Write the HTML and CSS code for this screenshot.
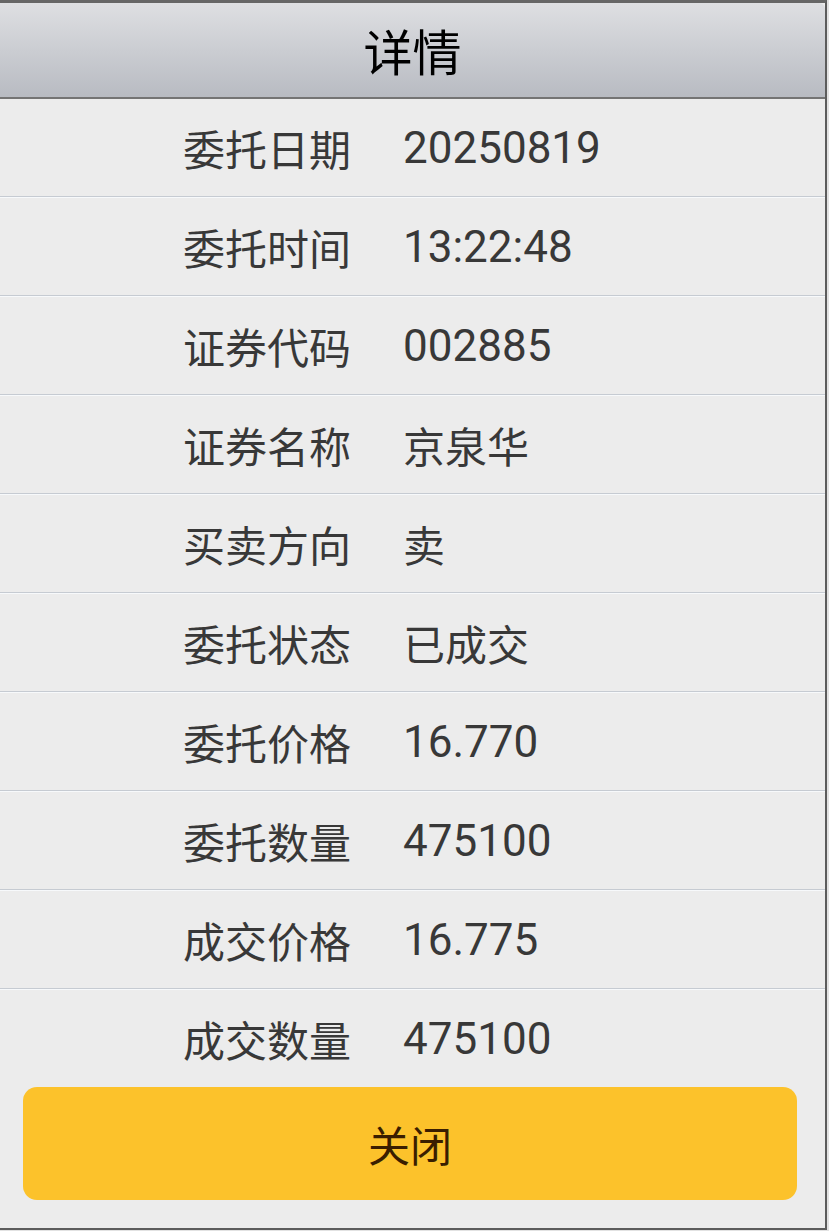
FILE: index.html
```html
<!DOCTYPE html>
<html lang="zh-CN">
<head>
    <meta charset="UTF-8">
    <meta name="viewport" content="width=device-width, initial-scale=1.0">
    <title>详情</title>
    <link rel="stylesheet" href="styles.css">
</head>
<body>
    <div class="dialog">
        <div class="dialog-title">详情</div>

        <div class="detail-list">
            <div class="detail-row"><span class="label">委托日期</span><span class="value">20250819</span></div>
            <div class="detail-row"><span class="label">委托时间</span><span class="value">13:22:48</span></div>
            <div class="detail-row"><span class="label">证券代码</span><span class="value">002885</span></div>
            <div class="detail-row"><span class="label">证券名称</span><span class="value cjk">京泉华</span></div>
            <div class="detail-row"><span class="label">买卖方向</span><span class="value cjk">卖</span></div>
            <div class="detail-row"><span class="label">委托状态</span><span class="value cjk">已成交</span></div>
            <div class="detail-row"><span class="label">委托价格</span><span class="value">16.770</span></div>
            <div class="detail-row"><span class="label">委托数量</span><span class="value">475100</span></div>
            <div class="detail-row"><span class="label">成交价格</span><span class="value">16.775</span></div>
            <div class="detail-row last"><span class="label">成交数量</span><span class="value">475100</span></div>
        </div>

        <div class="dialog-footer">
            <button class="close-btn">关闭</button>
        </div>
    </div>
</body>
</html>
```

FILE: styles.css
```css
body {
    margin: 0;
    background: #e2e2e2;
    font-family: Roboto, "Noto Sans CJK SC", sans-serif;
}

.dialog {
    width: 825px;
    background: #ececec;
    border-top: 3px solid #666;
    border-right: 2px solid #5c5c5c;
    border-bottom: 2px solid #5c5c5c;
}

/* title bar with grey gradient */
.dialog-title {
    height: 94px;
    line-height: 94px;
    text-align: center;
    font-family: "Noto Sans CJK SC", sans-serif;
    font-size: 49px;
    color: #000;
    background: linear-gradient(to bottom, #dedfe2, #b8bbc2);
    border-bottom: 2px solid #747474;
    border-top-right-radius: 6px;
}

.detail-row {
    display: flex;
    align-items: center;
    height: 97px;
    padding-left: 183px;
    color: #383838;
    border-bottom: 1px solid #c6cbd2;
    box-shadow: 0 1px 0 #f7f9fb;
    margin-bottom: 1px;
}

.detail-row.last {
    border-bottom: none;
    box-shadow: none;
    margin-bottom: 0;
}

.label {
    width: 176px;
    margin-right: 44px;
    font-size: 42px;
    white-space: nowrap;
}

.value {
    font-size: 44px;
    white-space: nowrap;
}

.value.cjk {
    font-size: 42px;
}

.dialog-footer {
    padding: 0 28px 28px 23px;
}

.close-btn {
    display: block;
    width: 100%;
    height: 113px;
    border: none;
    border-radius: 14px;
    background: #fcc22b;
    color: #3a1e00;
    font-family: "Noto Sans CJK SC", sans-serif;
    font-size: 42px;
    cursor: pointer;
}
```
